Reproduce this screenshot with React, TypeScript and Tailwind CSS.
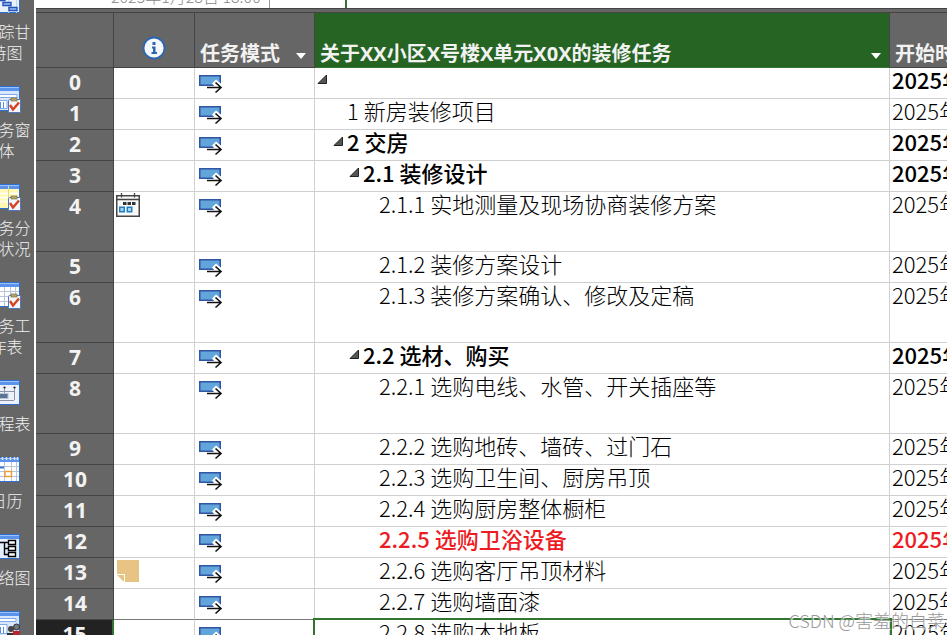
import { FC, ReactNode } from 'react';

type Task = {
  id: number;
  title: string;
  level: number;
  summary?: boolean;
  tall?: boolean;
  critical?: boolean;
  marker?: 'calendar' | 'note';
};

const tasks: Task[] = [
  { id: 0, title: '', level: 0, summary: true },
  { id: 1, title: '1 新房装修项目', level: 1 },
  { id: 2, title: '2 交房', level: 1, summary: true },
  { id: 3, title: '2.1 装修设计', level: 2, summary: true },
  { id: 4, title: '2.1.1 实地测量及现场协商装修方案', level: 3, tall: true, marker: 'calendar' },
  { id: 5, title: '2.1.2 装修方案设计', level: 3 },
  { id: 6, title: '2.1.3 装修方案确认、修改及定稿', level: 3, tall: true },
  { id: 7, title: '2.2 选材、购买', level: 2, summary: true },
  { id: 8, title: '2.2.1 选购电线、水管、开关插座等', level: 3, tall: true },
  { id: 9, title: '2.2.2 选购地砖、墙砖、过门石', level: 3 },
  { id: 10, title: '2.2.3 选购卫生间、厨房吊顶', level: 3 },
  { id: 11, title: '2.2.4 选购厨房整体橱柜', level: 3 },
  { id: 12, title: '2.2.5 选购卫浴设备', level: 3, critical: true },
  { id: 13, title: '2.2.6 选购客厅吊顶材料', level: 3, marker: 'note' },
  { id: 14, title: '2.2.7 选购墙面漆', level: 3 },
  { id: 15, title: '2.2.8 选购木地板', level: 3 },
];

const selectedId = 15;

// one step per outline level
const indents = ['pl-0', 'pl-4', 'pl-8', 'pl-12'];

const Clipboard: FC = () => (
  <g>
    <rect x="17.5" y="13.5" width="12" height="13" rx="1" fill="#f4f6fb" stroke="#4a78c4" />
    <rect x="20" y="12" width="6" height="3" fill="#b5a468" stroke="#7d7248" strokeWidth=".7" />
    <path d="M19 19l3 4.5 6-7" fill="none" stroke="#d8431f" strokeWidth="2.4" />
  </g>
);

const ViewIcon: FC<{ paper?: string; children: ReactNode }> = ({ paper = '#e9f1fc', children }) => (
  <svg className="block h-[27px] w-8" viewBox="0 0 32 27" aria-hidden="true">
    <rect x=".5" y=".5" width="28" height="24" fill={paper} stroke="#2f6fd0" />
    <rect x="1" y="1" width="27" height="4" fill="#5b93ec" />
    <path d="M1 1.5h27" stroke="#9cc2fa" />
    {children}
  </svg>
);

const views = [
  {
    lines: ['跟踪甘', '特图'],
    icon: (
      <ViewIcon>
        <path d="M8.5 5v20M17.5 5v20M25.5 5v20" stroke="#c3d3ee" />
        <path d="M8 9.5h6v3H8zM12 14.500h8v3h-8zM18 19.500h8v3h-8z" fill="#9cc2fa" stroke="#2453b5" strokeWidth="1.4" />
      </ViewIcon>
    ),
  },
  {
    lines: ['任务窗', '体'],
    icon: (
      <ViewIcon paper="#d9e7fb">
        <path d="M4 8.5h22v3H4zM4 14.5h12v8H4z" fill="#fff" stroke="#7fa8e8" />
        <path d="M9.5 16v6M12.5 16v6" stroke="#5b8de0" />
        <Clipboard />
      </ViewIcon>
    ),
  },
  {
    lines: ['任务分', '配状况'],
    icon: (
      <ViewIcon paper="#fff9b5">
        <path d="M1 9.5h27M1 13.5h27M1 17.5h27" stroke="#fff" strokeWidth="1.5" />
        <path d="M17.5 2v20" stroke="#e8d978" />
        <Clipboard />
      </ViewIcon>
    ),
  },
  {
    lines: ['任务工', '作表'],
    icon: (
      <ViewIcon paper="#fff">
        <path d="M1 9.5h27M1 14.5h27M1 19.5h27M7.5 5v19M13.5 5v19M19.5 5v19M24.5 5v19" stroke="#b7c4dc" />
        <Clipboard />
      </ViewIcon>
    ),
  },
  {
    lines: ['日程表'],
    icon: (
      <ViewIcon paper="#edf1fa">
        <path d="M2 11.5h21.500M13.5 8v5M23.5 8v12M2 20.5h21" fill="none" stroke="#8b93a6" />
        <path d="M12.5 7.5h2M22.5 7.5h2" stroke="#111" strokeWidth="1.5" />
        <rect x="3" y="13.5" width="14" height="5" fill="#5b7394" stroke="#b9c4d6" />
      </ViewIcon>
    ),
  },
  {
    lines: ['日历'],
    icon: (
      <ViewIcon paper="#fff">
        <path d="M1 9.5h27M1 14.5h27M1 19.5h27M7.5 5v19M13.5 5v19M20.5 5v19M25.5 5v19" stroke="#b7c4dc" />
        <path d="M3 10.5h10" stroke="#3d74d0" strokeWidth="2" />
        <rect x="14" y="14.5" width="6.5" height="5" fill="#fff" stroke="#ee9b3a" strokeWidth="1.4" />
        <path d="M3.5 0v3M7.5 0v3M11.5 0v3M15.5 0v3M19.5 0v3M23.5 0v3M26.5 0v3" stroke="#e4e4e4" strokeWidth="1.5" />
      </ViewIcon>
    ),
  },
  {
    lines: ['网络图'],
    icon: (
      <ViewIcon paper="#e3edfc">
        <path d="M7 8.5h10M13.5 8.5v12h4M13.5 14.5h4" fill="none" stroke="#000" strokeWidth="1.4" />
        <path d="M17.5 6.5h7v4h-7zM17.5 12.5h7v4h-7zM17.5 18.5h7v4h-7z" fill="#fff" stroke="#000" strokeWidth="1.4" />
      </ViewIcon>
    ),
  },
  {
    lines: ['资源窗', '体'],
    icon: (
      <ViewIcon paper="#d9e7fb">
        <path d="M4 7.5h21v3H4zM4 13.5h12v9H4z" fill="#fff" stroke="#7fa8e8" />
        <path d="M9.5 16v6M12.5 16v6" stroke="#5b8de0" />
        <circle cx="20" cy="18" r="3" fill="#444" />
        <circle cx="25.5" cy="16" r="3" fill="#777" stroke="#333" />
        <path d="M16 26v-4h6v4z" fill="#333" />
        <path d="M22 26v-6h7v6z" fill="#b3262e" />
      </ViewIcon>
    ),
  },
];

const ModeIcon: FC = () => (
  <svg className="ml-1 mt-[6px] block h-5 w-6" viewBox="0 0 24 20" role="img" aria-label="自动计划">
    <path d="M.75 1.75h20.5v9.5H.75z" fill="#62a5db" stroke="#2f55a4" strokeWidth="1.5" />
    <path d="M7 12.5h8.500L13 9.500 17 5.500l6 5V19H7z" fill="#fff" />
    <path d="M8 13.5h14M16.5 8.500l5.500 5-5.500 5" fill="none" stroke="#111" strokeWidth="1.6" />
  </svg>
);

const InfoIcon: FC = () => (
  <svg className="mx-auto block size-6" viewBox="0 0 24 24" role="img" aria-label="标记">
    <circle cx="12" cy="12" r="10.5" fill="#f5f8fb" stroke="#2b67b1" strokeWidth="1.8" />
    <path d="M10.5 6h3v3h-3zM10 10.5h3.5V16H15v2H9.5v-2H11v-3.500h-1z" fill="#2b67b1" />
  </svg>
);

const CalendarIcon: FC = () => (
  <svg className="ml-[2px] mt-px block size-6" viewBox="0 0 24 24" role="img" aria-label="限制">
    <rect x=".75" y="2.75" width="22.5" height="20.5" fill="#fafafa" stroke="#444" strokeWidth="1.5" />
    <path d="M1 6.5h22M5.5 0v4.5M18.5 0v4.5" stroke="#444" strokeWidth="1.3" />
    <path d="M7 9h3.5v3H7zM11.5 9H15v3h-3.5zM16 9h3.5v3H16z" fill="#333" />
    <path d="M3.75 14.25h4.5v4.5h-4.5zM11.25 14.25h4.5v4.5h-4.5z" fill="#a9d2f0" stroke="#1f7fc2" strokeWidth="1.5" />
  </svg>
);

const NoteIcon: FC = () => (
  <svg className="ml-[3px] mt-[2px] block size-[22px]" viewBox="0 0 22 22" role="img" aria-label="备注">
    <path d="M0 0h22v22H8v-8H0z" fill="#e8c484" />
    <path d="M0 15h7v7z" fill="#e8c484" />
  </svg>
);

const DropButton: FC<{ label: string }> = ({ label }) => (
  <button type="button" aria-label={label} className="mr-2 mb-2 shrink-0">
    <svg className="block h-[6px] w-[10px]" viewBox="0 0 10 6">
      <path d="M0 0h10L5 6z" fill="#fff" />
    </svg>
  </button>
);

const TaskRow: FC<{ task: Task }> = ({ task }) => {
  const selected = task.id === selectedId;
  const beforeSelected = task.id === selectedId - 1;
  const line = beforeSelected ? 'border-b-[#777]' : 'border-b-[#d0d0d0]';

  let tone = 'font-light text-black';
  if (task.critical) tone = 'font-medium text-[#ed1c24]';
  else if (task.summary) tone = 'font-medium text-black';

  return (
    <tr className={task.tall ? 'h-[60px]' : 'h-[31px]'}>
      <th
        scope="row"
        className={`border-r border-b border-b-[#444] p-0 pl-px align-top font-['Open_Sans','Noto_Sans_CJK_SC',sans-serif] text-[21px] leading-7 font-bold text-[#f2f2f2] ${
          selected ? 'border-r-2 border-r-[#31752f] bg-[#222]' : 'border-r-[#444] bg-[#666]'
        }`}
      >
        {task.id}
      </th>
      <td className={`border-r border-b border-r-[#d0d0d0] p-0 align-top ${line}`}>
        {task.marker === 'calendar' && <CalendarIcon />}
        {task.marker === 'note' && <NoteIcon />}
      </td>
      <td className={`border-r border-b border-r-[#d0d0d0] p-0 align-top ${line}`}>
        <ModeIcon />
      </td>
      <td
        className={`border-r border-b border-r-[#d0d0d0] p-0 align-top ${line} ${
          selected ? 'outline-2 outline-[#31752f]' : ''
        }`}
      >
        <div className={`flex h-[22px] items-center text-[22px] leading-[22px] whitespace-nowrap ${indents[task.level]} ${tone}`}>
          <span className="w-4 shrink-0 pl-[2px]">
            {task.summary && (
              <button type="button" aria-label="折叠" className="block">
                <svg className="block size-[10px]" viewBox="0 0 10 10">
                  <path d="M1 9.5L9.500 1v8.500z" fill="#555" stroke="#222" />
                </svg>
              </button>
            )}
          </span>
          <span>{task.title}</span>
        </div>
      </td>
      <td className={`border-b p-0 pl-[2px] align-top text-[22px] leading-[22px] whitespace-nowrap ${line} ${tone}`}>
        2025年1月28日
      </td>
    </tr>
  );
};

const App: FC = () => {
  return (
    <div className="relative flex h-screen overflow-hidden bg-white font-['Noto_Sans_CJK_SC',sans-serif]">
      <nav aria-label="视图" className="w-9 shrink-0 overflow-hidden border-r-2 border-white bg-[#666]">
        <ul className="-mt-3 -ml-5 w-[53px]">
          {views.map((view) => (
            <li key={view.lines[0]} className="mb-[23px]">
              <button
                type="button"
                className="flex w-full flex-col items-center gap-[6px] text-[16px] leading-[21px] font-light text-[#f0f0f0]"
              >
                {view.icon}
                <span>
                  {view.lines.map((text) => (
                    <span key={text} className="block whitespace-nowrap">
                      {text}
                    </span>
                  ))}
                </span>
              </button>
            </li>
          ))}
        </ul>
      </nav>

      <main className="min-w-0 flex-1">
        <div className="flex h-2 overflow-hidden">
          <div className="-mt-4 h-6 w-[234px] border-r border-[#999] pl-[75px] text-[16px] leading-6 font-light whitespace-nowrap text-[#888]">
            2025年1月28日 18:00
          </div>
          <div className="ml-[75px] w-[2px] bg-[#31752f]" />
        </div>
        <div className="h-[5px] border-y border-[#444] bg-[#666]" />

        <table className="w-full table-fixed border-separate border-spacing-0">
          <colgroup>
            <col className="w-[78px]" />
            <col className="w-[81px]" />
            <col className="w-[120px]" />
            <col className="w-[575px]" />
            <col />
          </colgroup>
          <thead className="font-['Open_Sans','Noto_Sans_CJK_SC',sans-serif] text-[20px] leading-[26px] text-[#f2f2f2]">
            <tr className="h-[55px] bg-[#666] text-left">
              <td className="border-r border-b border-[#444] p-0" />
              <th className="border-r border-b border-[#444] p-0 pt-[23px] align-top">
                <InfoIcon />
              </th>
              <th className="border-r border-b border-[#444] p-0 align-bottom">
                <div className="flex items-end justify-between pl-[5px] whitespace-nowrap">
                  任务模式
                  <DropButton label="任务模式筛选" />
                </div>
              </th>
              <th className="border-r border-b border-r-[#444] border-b-[#31752f] bg-[#256422] p-0 align-bottom">
                <div className="flex items-end justify-between pl-[5px] whitespace-nowrap">
                  关于XX小区X号楼X单元X0X的装修任务
                  <DropButton label="任务名称筛选" />
                </div>
              </th>
              <th className="overflow-hidden border-b border-[#444] p-0 pl-[5px] align-bottom whitespace-nowrap">开始时间</th>
            </tr>
          </thead>
          <tbody>
            {tasks.map((task) => (
              <TaskRow key={task.id} task={task} />
            ))}
          </tbody>
        </table>
      </main>

      <p className="absolute right-[2px] bottom-[3px] text-[18px] leading-6 font-light text-[#999] [text-shadow:1px_1px_1px_#fff]">
        CSDN @害羞的白菜
      </p>
    </div>
  );
};

export default App;
